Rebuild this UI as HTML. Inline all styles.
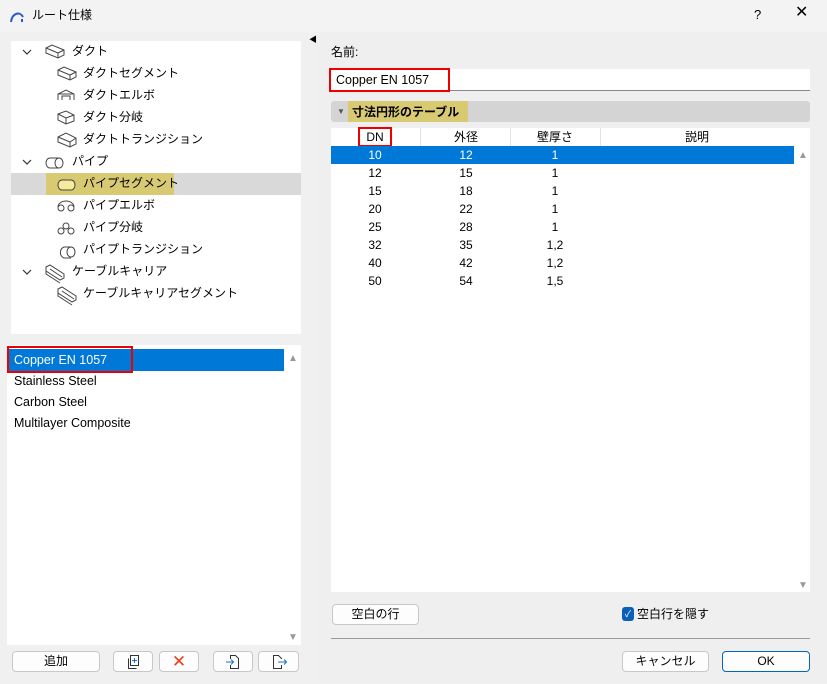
<!DOCTYPE html>
<html><head><meta charset="utf-8"><style>
*{margin:0;padding:0;box-sizing:border-box}
body{width:827px;height:684px;background:#f0f0f0;font-family:"Liberation Sans","Noto Sans CJK JP",sans-serif;font-size:12px;color:#000;position:relative;overflow:hidden}
.a{position:absolute}
.t{position:absolute;white-space:nowrap;line-height:14px}
.btn{position:absolute;background:#fdfdfd;border:1px solid #c8c8c8;border-radius:4px;text-align:center;line-height:18px;font-size:12px}
.row{position:absolute;left:331px;width:463px;height:18px;line-height:18px;font-size:12px}
.row span{position:absolute;width:60px;text-align:center}
</style></head><body>
<div class="a" style="left:0;top:0;width:827px;height:32px;background:#f3f3f3"></div>
<svg class="a" style="left:9px;top:8px" width="16" height="16"><path d="M2 14 C3 5 11 3 14 9" stroke="#2a58c8" stroke-width="2" fill="none"/><path d="M13 11v3" stroke="#2a58c8" stroke-width="2"/></svg>
<div class="t" style="left:32px;top:8px;font-size:12px">ルート仕様</div>
<div class="t" style="left:754px;top:8px;font-size:13px">?</div>
<div class="t" style="left:795px;top:6px;font-size:16px">✕</div>
<div class="a" style="left:318px;top:32px;width:509px;height:650px;background:#efefef"></div>
<div class="t" style="left:309px;top:33px;font-size:8px">◀</div>

<div class="a" style="left:11px;top:41px;width:290px;height:293px;background:#fff"></div>
<div class="a" style="left:11px;top:173px;width:290px;height:22px;background:#d9d9d9"></div>
<div class="a" style="left:46px;top:173px;width:128px;height:22px;background:#d8c973"></div>
<svg class="a" style="left:20px;top:44px" width="16" height="240" fill="none" stroke="#333" stroke-width="1.2"><path d="M3 6l4 4 4-4"/><path d="M3 116l4 4 4-4"/><path d="M3 226l4 4 4-4"/></svg>
<svg class="a" style="left:44px;top:44px" width="300" height="262" fill="none" stroke="#444" stroke-width="1">
<path d="M2 4l6-3 12 5v5l-6 3L2 9z M14 9l6-3 M14 9v5 M2 4l12 5"/>
<g transform="translate(12,22)"><path d="M2 4l6-3 12 5v5l-6 3L2 9z M14 9l6-3 M14 9v5 M2 4l12 5"/></g>
<g transform="translate(12,44)"><path d="M2 12v-6l8-4 8 4v6 M2 6h16 M6 12v-4h8v4"/></g>
<g transform="translate(12,66)"><path d="M2 4l8-3 8 4v6l-8 3-8-4z M2 4l8 4 8-3 M10 8v6"/></g>
<g transform="translate(12,88)"><path d="M2 5l8-4 10 5v6l-6 3L2 10z M14 10l6-4 M14 10v5 M2 5l12 5"/></g>
<g transform="translate(0,110)"><ellipse cx="15" cy="9" rx="4" ry="5"/><path d="M15 4H6a4 5 0 0 0 0 10h9"/></g>
<g transform="translate(12,132)"><ellipse cx="15" cy="9" rx="4" ry="5" fill="#f5eb9a"/><path d="M15 4H6a4 5 0 0 0 0 10h9" fill="#f5eb9a"/></g>
<g transform="translate(12,154)"><circle cx="5" cy="10" r="3"/><circle cx="15" cy="10" r="3"/><path d="M2 9a8 6 0 0 1 16 0"/></g>
<g transform="translate(12,176)"><circle cx="5" cy="11" r="3"/><circle cx="15" cy="11" r="3"/><circle cx="10" cy="6" r="3"/></g>
<g transform="translate(12,198)"><ellipse cx="15" cy="10" rx="4" ry="5"/><path d="M15 5H8a6 6 0 0 0 0 11h7"/></g>
<g transform="translate(0,220)"><path d="M2 3l4-2 14 9v4l-4 2L2 7z M6 5l12 8 M2 7v3l14 9"/></g>
<g transform="translate(12,242)"><path d="M2 3l4-2 14 9v4l-4 2L2 7z M6 5l12 8 M2 7v3l14 9"/></g>
</svg>
<div class="t" style="left:72px;top:44px">ダクト</div>
<div class="t" style="left:83px;top:66px">ダクトセグメント</div>
<div class="t" style="left:83px;top:88px">ダクトエルボ</div>
<div class="t" style="left:83px;top:110px">ダクト分岐</div>
<div class="t" style="left:83px;top:132px">ダクトトランジション</div>
<div class="t" style="left:72px;top:154px">パイプ</div>
<div class="t" style="left:83px;top:176px">パイプセグメント</div>
<div class="t" style="left:83px;top:198px">パイプエルボ</div>
<div class="t" style="left:83px;top:220px">パイプ分岐</div>
<div class="t" style="left:83px;top:242px">パイプトランジション</div>
<div class="t" style="left:72px;top:264px">ケーブルキャリア</div>
<div class="t" style="left:83px;top:286px">ケーブルキャリアセグメント</div>

<div class="a" style="left:7px;top:345px;width:294px;height:300px;background:#fff"></div>
<div class="a" style="left:8px;top:349px;width:276px;height:22px;background:#0078d7"></div>
<div class="a" style="left:7px;top:346px;width:126px;height:27px;border:2px solid #e00"></div>
<div class="t" style="left:14px;top:353px;color:#fff;font-size:12.5px">Copper EN 1057</div>
<div class="t" style="left:14px;top:374px;font-size:12.5px">Stainless Steel</div>
<div class="t" style="left:14px;top:395px;font-size:12.5px">Carbon Steel</div>
<div class="t" style="left:14px;top:416px;font-size:12.5px">Multilayer Composite</div>
<div class="t" style="left:288px;top:352px;color:#999;font-size:10px">▲</div>
<div class="t" style="left:288px;top:631px;color:#999;font-size:10px">▼</div>

<div class="btn" style="left:12px;top:651px;width:88px;height:21px">追加</div>
<div class="btn" style="left:113px;top:651px;width:40px;height:21px"><svg width="16" height="16" style="margin-top:2px" fill="none" stroke="#333"><rect x="5.5" y="1.5" width="8" height="10"/><path d="M3.5 4.5v10h8" /><path d="M9.5 4v5M7 6.5h5" stroke="#1a6fd0"/></svg></div>
<div class="btn" style="left:159px;top:651px;width:40px;height:21px;color:#e8401c;font-size:17px;line-height:19px">✕</div>
<div class="btn" style="left:213px;top:651px;width:40px;height:21px"><svg width="16" height="16" style="margin-top:2px" fill="none" stroke="#333"><path d="M5.5 5V1.5h5l3 3v10h-8V11"/><path d="M1 8h7M6 5.5L8.5 8 6 10.5" stroke="#1a6fd0"/></svg></div>
<div class="btn" style="left:258px;top:651px;width:41px;height:21px"><svg width="16" height="16" style="margin-top:2px" fill="none" stroke="#333"><path d="M10.5 5V4.5l-3-3h-5v13h8V11"/><path d="M7 8h8M13 5.5L15.5 8 13 10.5" stroke="#1a6fd0"/></svg></div>

<div class="t" style="left:331px;top:45px">名前:</div>
<div class="a" style="left:331px;top:69px;width:479px;height:22px;background:#fff;border-bottom:1px solid #888"></div>
<div class="a" style="left:329px;top:68px;width:121px;height:24px;border:2px solid #e00"></div>
<div class="t" style="left:336px;top:73px;font-size:12.5px">Copper EN 1057</div>
<div class="a" style="left:331px;top:101px;width:479px;height:21px;background:#d4d4d4;border-radius:3px"></div>
<div class="a" style="left:348px;top:101px;width:120px;height:21px;background:#d8c973"></div>
<div class="t" style="left:337px;top:105px;font-size:8px;color:#555">▼</div>
<div class="t" style="left:352px;top:105px;font-weight:bold">寸法円形のテーブル</div>
<div class="a" style="left:331px;top:128px;width:463px;height:464px;background:#fff"></div>
<div class="a" style="left:794px;top:128px;width:16px;height:464px;background:#fff"></div>
<div class="a" style="left:420px;top:128px;width:1px;height:18px;background:#e3e3e3"></div>
<div class="a" style="left:510px;top:128px;width:1px;height:18px;background:#e3e3e3"></div>
<div class="a" style="left:600px;top:128px;width:1px;height:18px;background:#e3e3e3"></div>
<div class="row" style="top:128px"><span style="left:14px">DN</span><span style="left:105px">外径</span><span style="left:194px">壁厚さ</span><span style="left:336px">説明</span></div>
<div class="a" style="left:358px;top:127px;width:34px;height:20px;border:2px solid #e00"></div>
<div class="a" style="left:331px;top:146px;width:463px;height:18px;background:#0078d7"></div>
<div class="row" style="top:146px;color:#fff"><span style="left:14px">10</span><span style="left:105px">12</span><span style="left:194px">1</span></div>
<div class="row" style="top:164px"><span style="left:14px">12</span><span style="left:105px">15</span><span style="left:194px">1</span></div>
<div class="row" style="top:182px"><span style="left:14px">15</span><span style="left:105px">18</span><span style="left:194px">1</span></div>
<div class="row" style="top:200px"><span style="left:14px">20</span><span style="left:105px">22</span><span style="left:194px">1</span></div>
<div class="row" style="top:218px"><span style="left:14px">25</span><span style="left:105px">28</span><span style="left:194px">1</span></div>
<div class="row" style="top:236px"><span style="left:14px">32</span><span style="left:105px">35</span><span style="left:194px">1,2</span></div>
<div class="row" style="top:254px"><span style="left:14px">40</span><span style="left:105px">42</span><span style="left:194px">1,2</span></div>
<div class="row" style="top:272px"><span style="left:14px">50</span><span style="left:105px">54</span><span style="left:194px">1,5</span></div>
<div class="t" style="left:798px;top:149px;color:#999;font-size:10px">▲</div>
<div class="t" style="left:798px;top:579px;color:#999;font-size:10px">▼</div>

<div class="btn" style="left:332px;top:604px;width:87px;height:21px">空白の行</div>
<div class="a" style="left:622px;top:607px;width:12px;height:14px;background:#0c5fb8;border-radius:3px;color:#fff;font-size:9px;text-align:center;line-height:14px">✓</div>
<div class="t" style="left:637px;top:607px">空白行を隠す</div>
<div class="a" style="left:331px;top:638px;width:479px;height:1px;background:#999"></div>
<div class="btn" style="left:622px;top:651px;width:87px;height:21px">キャンセル</div>
<div class="btn" style="left:722px;top:651px;width:88px;height:21px;border-color:#0067c0">OK</div>
</body></html>
